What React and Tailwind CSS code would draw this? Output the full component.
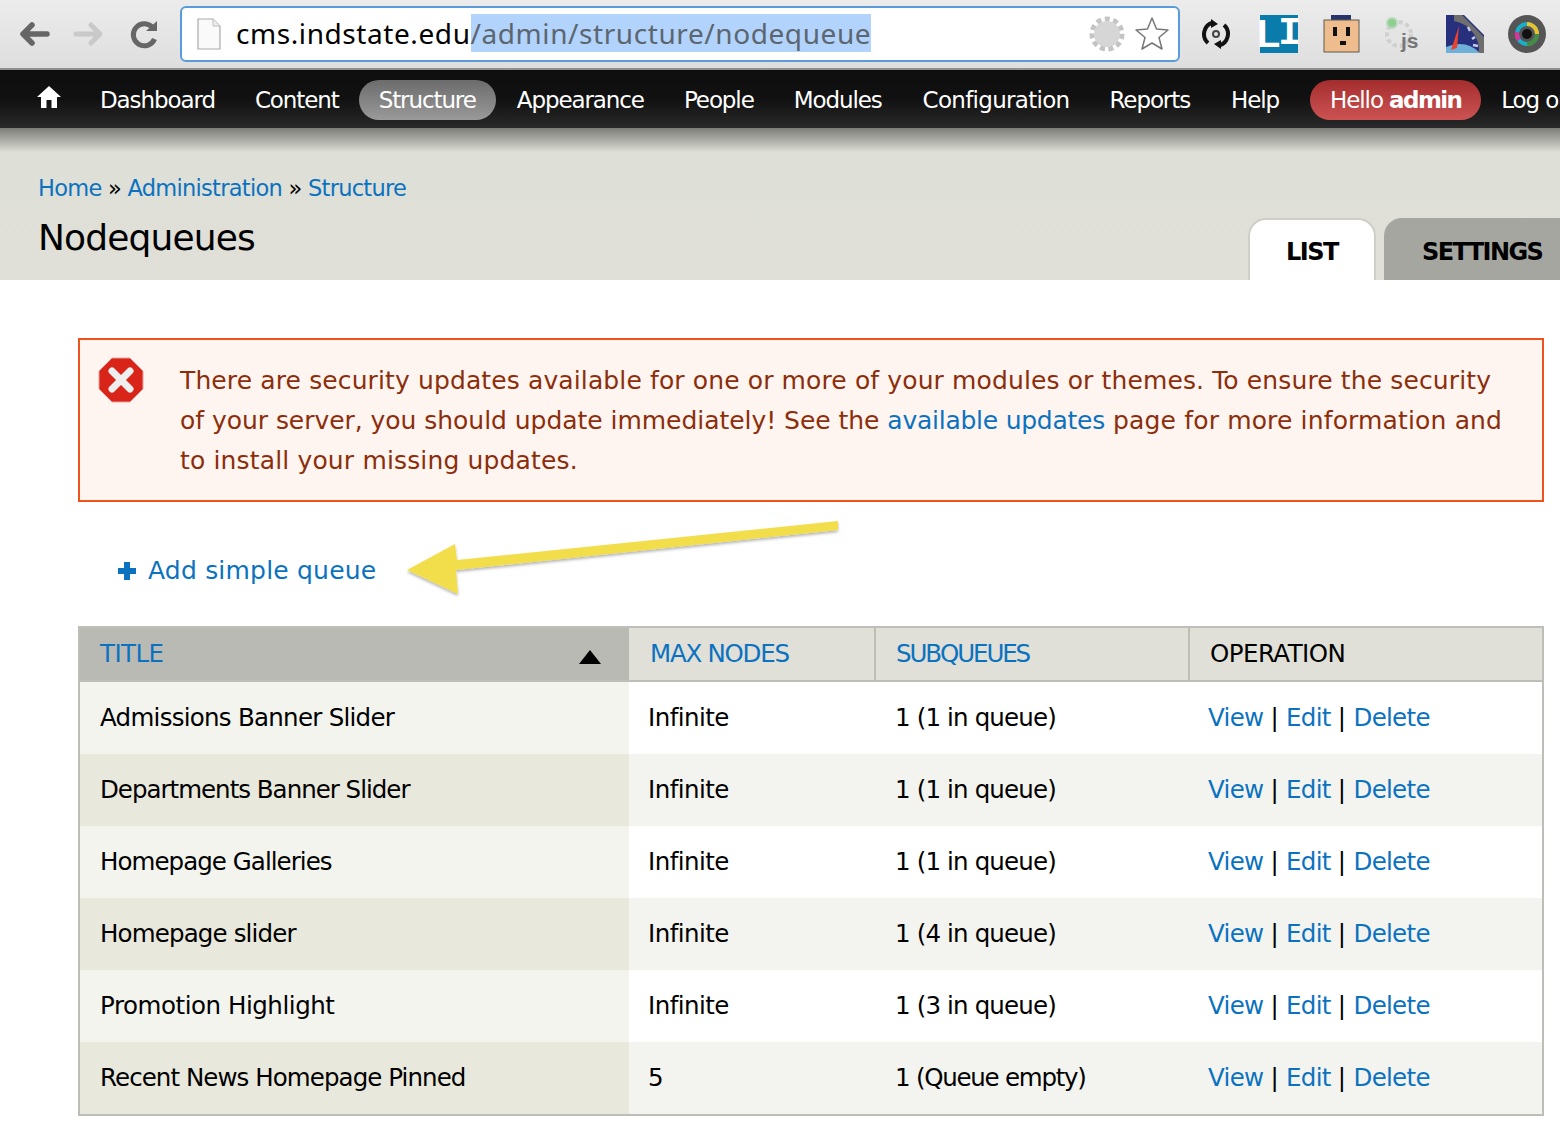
const font = { fontFamily: '"DejaVu Sans", sans-serif' };

const navItems = [
  { label: 'Dashboard', cls: 'px-5' },
  { label: 'Content', cls: 'px-5' },
  { label: 'Structure', cls: 'rounded-[20px] bg-gradient-to-b from-[#6c6c6c] to-[#9a9a9a] px-5' },
  { label: 'Appearance', cls: 'ml-[1px] px-5' },
  { label: 'People', cls: 'px-5' },
  { label: 'Modules', cls: 'px-5' },
  { label: 'Configuration', cls: 'ml-[1px] px-5 tracking-[-0.7px]' },
  { label: 'Reports', cls: 'px-5' },
  { label: 'Help', cls: 'ml-[1px] px-5' },
];

const rows = [
  { t: 'Admissions Banner Slider', track: 'tracking-[-0.73px]', m: 'Infinite', q: '1 (1 in queue)', qt: 'tracking-[-0.85px]' },
  { t: 'Departments Banner Slider', track: 'tracking-[-1px]', m: 'Infinite', q: '1 (1 in queue)', qt: 'tracking-[-0.85px]' },
  { t: 'Homepage Galleries', track: 'tracking-[-0.95px]', m: 'Infinite', q: '1 (1 in queue)', qt: 'tracking-[-0.85px]' },
  { t: 'Homepage slider', track: 'tracking-[-0.85px]', m: 'Infinite', q: '1 (4 in queue)', qt: 'tracking-[-0.85px]' },
  { t: 'Promotion Highlight', track: 'tracking-[-0.45px]', m: 'Infinite', q: '1 (3 in queue)', qt: 'tracking-[-0.85px]' },
  { t: 'Recent News Homepage Pinned', track: 'tracking-[-0.93px]', m: '5', q: '1 (Queue empty)', qt: 'tracking-[-1.25px]' },
];

function Toolbar() {
  return (
    <div className="flex h-[70px] items-center border-b-2 border-[#8f8f8f] bg-gradient-to-b from-[#ececec] to-[#dedede]">
      <svg width="34" height="30" viewBox="0 0 34 30" className="ml-[17px] shrink-0">
        <path d="M15 6 L6 15 L15 24 M7 15 H30" fill="none" stroke="#666" strokeWidth="5.5" strokeLinecap="round" strokeLinejoin="round" />
      </svg>
      <svg width="34" height="30" viewBox="0 0 34 30" className="ml-[21px] shrink-0">
        <path d="M19 6 L28 15 L19 24 M27 15 H4" fill="none" stroke="#c9c9c9" strokeWidth="5" strokeLinecap="round" strokeLinejoin="round" />
      </svg>
      <svg width="32" height="32" viewBox="0 0 32 32" className="ml-[23px] shrink-0">
        <path d="M24 10 A11 11 0 1 0 25.5 21" fill="none" stroke="#666" strokeWidth="5" />
        <path d="M17 13 L28 13 L28 3 Z" fill="#666" />
      </svg>
      <div className="ml-[19px] flex h-[56px] w-[1000px] shrink-0 items-center rounded-[6px] border-2 border-[#5b9bd9] bg-white">
        <svg width="24" height="32" viewBox="0 0 24 32" className="ml-[15px] shrink-0">
          <path d="M1 1 H16 L23 8 V31 H1 Z" fill="#fafafa" stroke="#aaa" strokeWidth="1.2" />
          <path d="M16 1 V8 H23" fill="#eee" stroke="#bbb" strokeWidth="1" />
        </svg>
        <div className="mb-[2px] ml-[15px] whitespace-nowrap text-[28px] leading-[34px] tracking-[0.58px]" style={{ fontFamily: '"Noto Sans", sans-serif' }}>
          <span className="text-black">cms.indstate.edu</span>
          <span className="bg-[#b2d3fb] text-[#5c6670]">/admin/structure/nodequeue</span>
        </div>
        <div className="ml-auto mr-[8px] flex items-center gap-[9px]">
          <svg width="36" height="36" viewBox="0 0 36 36">
            <circle cx="18" cy="18" r="15" fill="none" stroke="#c4c4c4" strokeWidth="5" strokeDasharray="5 3.5" />
            <circle cx="18" cy="18" r="13" fill="#d6d6d6" />
          </svg>
          <svg width="36" height="36" viewBox="0 0 36 36">
            <path d="M18 2 L22.5 13 L34 14 L25 21.5 L28 33 L18 27 L8 33 L11 21.5 L2 14 L13.5 13 Z" fill="#fff" stroke="#777" strokeWidth="1.5" strokeLinejoin="round" />
          </svg>
        </div>
      </div>
      <svg width="30" height="30" viewBox="0 0 30 30" className="ml-[21px] shrink-0">
        <path d="M7 24 A12 12 0 0 1 12 3.5 M23 6 A12 12 0 0 1 18 26.5" fill="none" stroke="#111" strokeWidth="4" />
        <path d="M10 0 L17 5 L10 9 Z M20 30 L13 25 L20 21 Z" fill="#111" />
        <circle cx="15" cy="15" r="3" fill="none" stroke="#444" strokeWidth="2" />
      </svg>
      <div className="ml-[29px] flex h-[38px] w-[38px] shrink-0 items-center justify-center bg-[#0a7cab] text-[38px] font-bold leading-none text-white">
        <span style={{ fontFamily: '"Liberation Sans", sans-serif' }}>L</span>
        <span style={{ fontFamily: '"Liberation Mono", monospace' }} className="-ml-[2px]">I</span>
      </div>
      <svg width="38" height="40" viewBox="0 0 38 40" className="ml-[25px] shrink-0">
        <rect x="8" y="1" width="20" height="5" fill="#27346b" />
        <rect x="1" y="6" width="35" height="32" fill="#eebc8d" stroke="#5f5a50" strokeWidth="1" />
        <rect x="10" y="13" width="4" height="9" fill="#111" />
        <rect x="23" y="13" width="4" height="9" fill="#111" />
        <rect x="17" y="27" width="6" height="4" fill="#111" />
      </svg>
      <svg width="38" height="38" viewBox="0 0 38 38" className="ml-[23px] shrink-0">
        <circle cx="15" cy="19" r="12" fill="#e4e4e4" stroke="#cfcfcf" strokeWidth="4" strokeDasharray="4 3" />
        <circle cx="8" cy="8" r="5" fill="#8fcf8f" stroke="#b9d9b9" strokeWidth="2" />
        <text x="17" y="33" fontSize="21" fontWeight="700" fill="#777" fontFamily="Liberation Sans, sans-serif">js</text>
      </svg>
      <svg width="38" height="38" viewBox="0 0 38 38" className="ml-[24px] shrink-0">
        <path d="M0 0 H18 L38 20 V38 H0 Z" fill="#27307d" />
        <path d="M16 0 L38 22 V38 H33 A30 30 0 0 0 8 6 L8 0 Z" fill="#6e6e6e" />
        <path d="M0 32 Q20 24 34 38 H0 Z" fill="#6fb0d8" />
        <path d="M5 35 L13 11 L11 33 Z" fill="#e8432e" />
        <path d="M22 12 L24 16 M29 22 L26 24 M32 31 L27 30" stroke="#c7cbe4" strokeWidth="2.5" />
      </svg>
      <svg width="38" height="38" viewBox="0 0 38 38" className="ml-[24px] shrink-0">
        <circle cx="19" cy="19" r="19" fill="#555" />
        <circle cx="19" cy="19" r="10" fill="none" stroke="#16b0c9" strokeWidth="4" />
        <path d="M19 9 A10 10 0 0 1 29 19" fill="none" stroke="#e9c12f" strokeWidth="4" />
        <path d="M11 25 A10 10 0 0 1 9 17" fill="none" stroke="#d9349a" strokeWidth="4" />
        <path d="M19 29 A10 10 0 0 0 29 19" fill="none" stroke="#4a8c3f" strokeWidth="4" />
        <circle cx="19" cy="19" r="5" fill="#111" />
      </svg>
    </div>
  );
}

function Nav() {
  return (
    <div className="h-[58px] bg-gradient-to-b from-[#0e0e0e] via-[#111111] via-[50%] to-[#2a2a2a]">
      <div className="flex h-full items-center whitespace-nowrap pl-[36px] pt-[2px] text-[23px] leading-[40px] tracking-[-1.1px] text-white">
        <svg width="26" height="26" viewBox="0 0 26 26" className="mb-[6px] mr-[18px] shrink-0">
          <path d="M13 2 L25 13 L21 13 L21 24 L15.5 24 L15.5 16 L10.5 16 L10.5 24 L5 24 L5 13 L1 13 Z" fill="#fff" />
        </svg>
        {navItems.map(({ label, cls }) => (
          <span key={label} className={`h-[40px] text-white ${cls}`}>
            {label}
          </span>
        ))}
        <span className="ml-[11px] h-[40px] rounded-[20px] bg-gradient-to-b from-[#a42d2d] to-[#cd5353] px-5 text-white">
          Hello <b className="font-bold tracking-[-1.6px]">admin</b>
        </span>
        <span className="h-[40px] px-5 text-white">Log out</span>
      </div>
    </div>
  );
}

function PageHeader() {
  return (
    <div className="flex h-[152px] justify-between bg-[#e0e0d8] bg-gradient-to-b from-[#7d7d78] from-0% via-[#dedfd7] via-[16%] to-[#e0e0d8]">
      <div className="pl-[38px] pt-[44px]">
        <div className="text-[22.5px] leading-[32px] tracking-[-0.72px] text-[#0b72c0]">
          Home <span className="text-black">»</span> Administration <span className="text-black">»</span> Structure
        </div>
        <h1 className="mt-[12px] text-[36px] leading-[44px] tracking-[-0.85px] text-black">Nodequeues</h1>
      </div>
      <div className="flex items-end gap-[8px] self-end">
        <div className="flex h-[62px] w-[128px] justify-center rounded-t-[18px] border-x-2 border-t-2 border-[#cfcfc8] bg-white pt-[16px] text-[24px] font-bold leading-[32px] tracking-[-1.5px] text-black">
          LIST
        </div>
        <div className="h-[62px] w-[176px] rounded-tl-[18px] bg-[#a6a6a0] pl-[38px] pt-[18px] text-[24px] font-bold leading-[32px] tracking-[-1.6px] text-black">
          SETTINGS
        </div>
      </div>
    </div>
  );
}

function Alert() {
  return (
    <div className="ml-[78px] mt-[58px] flex h-[164px] w-[1466px] border-2 border-[#ed541d] bg-[#fef5f1] text-[25px] leading-[40px] text-[#8c2e0b]">
      <svg width="46" height="46" viewBox="0 0 46 46" className="ml-[18px] mt-[17px] shrink-0">
        <path d="M14 1 H32 L45 14 V32 L32 45 H14 L1 32 V14 Z" fill="#d92519" stroke="#e8a09a" strokeWidth="1" />
        <path d="M14 14 L32 32 M32 14 L14 32" stroke="#efefef" strokeWidth="7" strokeLinecap="round" />
      </svg>
      <p className="ml-[36px] w-[1335px] pt-[21px]">
        <span className="tracking-[0.12px]">There are security updates available for one or more of your modules or themes. To ensure the security </span>
        <span className="tracking-[-0.04px]">of your server, you should update immediately! See the </span>
        <span className="tracking-[-0.25px] text-[#0b72c0]">available updates</span>
        <span className="tracking-[0.15px]"> page for more information and to install your missing updates.</span>
      </p>
    </div>
  );
}

function AddLink() {
  return (
    <div className="relative flex h-[124px] items-center pl-[118px] pt-[14px] text-[25px] leading-[40px] tracking-[0.2px] text-[#0b72c0]">
      <svg width="18" height="18" viewBox="0 0 18 18" className="mr-[12px] shrink-0">
        <path d="M6 0 H12 V6 H18 V12 H12 V18 H6 V12 H0 V6 H6 Z" fill="#0b72c0" />
      </svg>
      Add simple queue
      <svg width="450" height="90" viewBox="0 0 450 90" className="absolute left-[400px] top-[14px]">
        <defs>
          <filter id="arrowShadow" x="-5%" y="-10%" width="110%" height="130%">
            <feDropShadow dx="0" dy="2" stdDeviation="1.5" floodColor="#000" floodOpacity="0.3" />
          </filter>
        </defs>
        <path d="M438 5 L438 14 L56 54 L58 78 L7 54 L55 28 L57 44 Z" fill="#f2dd4b" filter="url(#arrowShadow)" />
      </svg>
    </div>
  );
}

function QueueTable() {
  return (
    <div className="ml-[78px] w-[1466px] border-2 border-[#bdbeb8]">
      <table className="w-full table-fixed border-separate border-spacing-0 text-[24.5px] leading-[32px] tracking-[-0.55px]">
        <colgroup>
          <col className="w-[549px]" />
          <col className="w-[247px]" />
          <col className="w-[314px]" />
          <col />
        </colgroup>
        <thead>
          <tr className="h-[54px] text-left">
            <th className="border-b-2 border-[#bdbeb8] bg-[#babab4] pl-[20px] font-normal text-[#0b72c0]">
              <div className="flex items-center justify-between pr-[28px]">
                <span>TITLE</span>
                <svg width="22" height="14" viewBox="0 0 22 14" className="mt-[6px]">
                  <path d="M11 0 L22 14 H0 Z" fill="#000" />
                </svg>
              </div>
            </th>
            <th className="border-b-2 border-r-2 border-[#bdbeb8] bg-[#e0e0d8] pl-[21px] font-normal tracking-[-1.25px] text-[#0b72c0]">MAX NODES</th>
            <th className="border-b-2 border-r-2 border-[#bdbeb8] bg-[#e0e0d8] pl-[20px] font-normal tracking-[-2.1px] text-[#0b72c0]">SUBQUEUES</th>
            <th className="border-b-2 border-[#bdbeb8] bg-[#e0e0d8] pl-[20px] font-normal text-black">OPERATION</th>
          </tr>
        </thead>
        <tbody>
          {rows.map((r, i) => (
            <tr key={r.t} className={i % 2 === 0 ? 'h-[72px] bg-white' : 'h-[72px] bg-[#f3f4ef]'}>
              <td className={`pl-[20px] text-black ${r.track} ${i % 2 === 0 ? 'bg-[#f3f4ee]' : 'bg-[#e8e8dc]'}`}>{r.t}</td>
              <td className="pl-[19px] text-black">{r.m}</td>
              <td className={`pl-[19px] text-black ${r.qt}`}>{r.q}</td>
              <td className="pl-[18px] tracking-[-0.7px] text-black">
                <span className="text-[#0b72c0]">View</span> | <span className="ml-[1px] text-[#0b72c0]">Edit</span> | <span className="ml-[1px] text-[#0b72c0]">Delete</span>
              </td>
            </tr>
          ))}
        </tbody>
      </table>
    </div>
  );
}

export default function App() {
  return (
    <div className="h-[1128px] overflow-hidden bg-white" style={font}>
      <Toolbar />
      <Nav />
      <PageHeader />
      <Alert />
      <AddLink />
      <QueueTable />
    </div>
  );
}
